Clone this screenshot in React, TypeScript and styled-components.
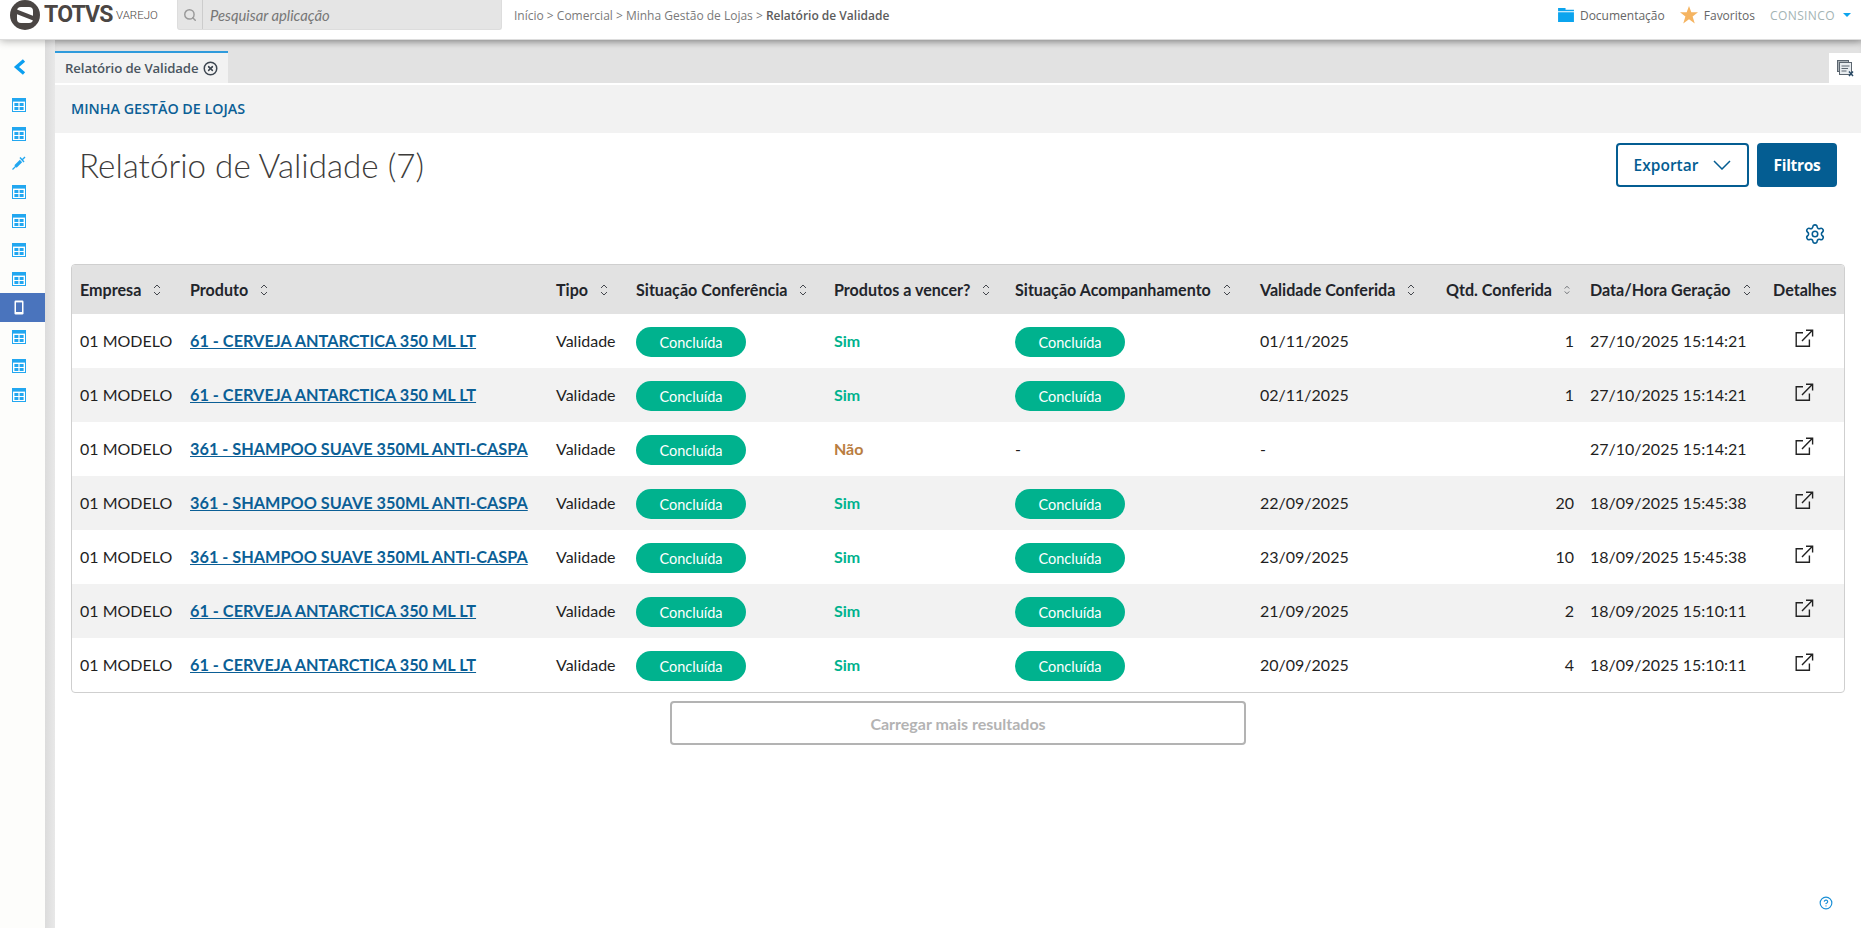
import React from 'react';
import styled, { createGlobalStyle } from 'styled-components';
import { Settings, Search, XCircle, CircleHelp } from 'lucide-react';

const Global = createGlobalStyle`
  html, body { margin: 0; padding: 0; height: 100%; background: #fff; overflow: hidden; }
  * { box-sizing: border-box; }
  body { font-family: Lato, "Open Sans", sans-serif; }
`;

const Page = styled.div`width: 1861px; height: 928px; display: flex; flex-direction: column; overflow: hidden;`;
const Header = styled.header`
  height: 40px; flex: none; display: flex; align-items: flex-start; background: #fff; position: relative; z-index: 2;
  box-shadow: 0 1px 8px rgba(0,0,0,.3); padding-left: 10px; border-bottom: 1px solid #ddd;
`;
const Logo = styled.div`width: 167px; height: 30px; display: flex; align-items: center; flex: none;`;
const LogoWord = styled.span`font: 700 23px/30px Roboto, sans-serif; color: #4b4644; margin-left: 4px; letter-spacing: -.8px; width: 67px; flex: none;`;
const LogoSub = styled.span`font: 300 11.5px/30px Roboto, sans-serif; color: #4b4644; margin-left: 5px;`;
const SearchBox = styled.div`width: 325px; height: 30px; flex: none; background: #e5e5e5; border-radius: 0 0 3px 3px; border: 1px solid #ddd; border-top: 0; display: flex; align-items: center;`;
const SearchIcon = styled.div`width: 25px; height: 100%; display: flex; align-items: center; justify-content: center; color: #999; border-right: 1px solid #ccc; flex: none;`;
const SearchText = styled.span`font: italic 400 14.8px Lato, sans-serif; color: #777; padding-left: 7px;`;
const Crumbs = styled.div`margin-left: 12px; height: 30px; display: flex; align-items: center; font: 400 12px "Open Sans", sans-serif; color: #7a7a7a; white-space: pre;`;
const CrumbCurrent = styled.b`font-weight: 600; color: #5c5c5c;`;
const HeaderRight = styled.div`margin-left: auto; height: 30px; display: flex; align-items: center; padding-right: 10px;`;
const HeaderLink = styled.span`font: 400 12px "Open Sans", sans-serif; color: #666; margin-left: 6px; margin-right: 15px;`;
const Company = styled.span`font: 400 12px "Open Sans", sans-serif; color: #a3b4b4; margin-right: 8px; letter-spacing: .4px;`;
const Caret = styled.i`width: 0; height: 0; border: 4px solid transparent; border-top: 4px solid #0ba4ee; border-bottom: 0;`;

const Body = styled.div`flex: 1; display: flex; min-height: 0;`;
const Sidebar = styled.nav`width: 45px; flex: none; background: #fdfdfb; padding-top: 10px; display: flex; flex-direction: column; align-items: stretch;`;
const SideItem = styled.div<{ $active?: boolean }>`
  height: 29px; display: flex; align-items: center; justify-content: center; flex: none; padding-right: 7px;
  background: ${p => (p.$active ? '#4a74bd' : 'transparent')};
`;
const BackItem = styled(SideItem)`height: 34px; margin-bottom: 6px;`;
const Gutter = styled.div`width: 10px; flex: none; background: linear-gradient(to right, #dcdcdc, #e8e8e8);`;
const Main = styled.main`flex: 1; min-width: 0; display: flex; flex-direction: column; background: #fff;`;
const TabBar = styled.div`height: 43px; flex: none; background: #e2e2e2; display: flex; align-items: flex-end; justify-content: space-between; box-shadow: inset 0 6px 6px -4px rgba(0,0,0,.18);`;
const Tab = styled.div`width: 173px; height: 32px; background: #f2f2f2; border-top: 2px solid #2f9bdc; display: flex; align-items: center; padding-left: 10px; gap: 5px; font: 600 13.2px "Open Sans", sans-serif; color: #4a5560; white-space: nowrap; letter-spacing: -.1px;`;
const CloseTabs = styled.div`width: 32px; height: 30px; background: #fff; display: flex; align-items: center; justify-content: center;`;
const Strip = styled.div`height: 48px; flex: none; margin-top: 2px; background: #f2f2f2; padding: 0 0 2px 16px; display: flex; align-items: center; font: 600 14.3px "Open Sans", sans-serif; color: #0b5f96; white-space: nowrap;`;
const TitleRow = styled.div`height: 89px; flex: none; display: flex; justify-content: space-between; align-items: flex-start; padding: 10px 24px 0 24px;`;
const Title = styled.h1`margin: 0; font: 300 33.2px/44px Lato, sans-serif; color: #3d3c3b;`;
const Actions = styled.div`display: flex; gap: 8px;`;
const ExportButton = styled.button`width: 133px; height: 44px; border: 2px solid #045d92; border-radius: 4px; background: #fff; color: #045d92; font: 600 15.5px "Open Sans", sans-serif; display: flex; align-items: center; justify-content: center; gap: 15px; padding: 0;`;
const FilterButton = styled.button`width: 80px; height: 44px; border: 0; border-radius: 4px; background: #045d92; color: #fff; font: 700 15.5px "Open Sans", sans-serif; padding: 0; letter-spacing: -.3px;`;
const GearRow = styled.div`height: 42px; flex: none; display: flex; justify-content: flex-end; padding: 1px 35px 0 0; color: #045d92;`;
const TableWrap = styled.div`margin: 0 16px; border: 1px solid #cfcfcf; border-radius: 4px; overflow: hidden; flex: none;`;
const Table = styled.table`width: 1772px; table-layout: fixed; border-collapse: collapse; font-family: Lato, sans-serif; color: #1f1f1f;`;
const HeadRow = styled.tr`height: 49px; background: #e2e2e2;`;
const Th = styled.th<{ $right?: boolean }>`padding: 0 ${p => (p.$right ? 12 : 8)}px 0 8px; text-align: left; font-size: 16.1px; font-weight: 700; color: #22252b; white-space: nowrap; overflow: hidden;`;
const ThInner = styled.span<{ $right?: boolean }>`display: flex; align-items: center; gap: 12px; justify-content: ${p => (p.$right ? 'flex-end' : 'flex-start')};`;
const Row = styled.tr`height: 54px; &:nth-child(even) { background: #f2f2f2; }`;
const Td = styled.td<{ $right?: boolean; $center?: boolean }>`padding: 0 8px 2px; font-size: 16px; white-space: nowrap; text-align: ${p => (p.$right ? 'right' : p.$center ? 'center' : 'left')};`;
const ProductLink = styled.a`color: #0b5f96; font-weight: 700; text-decoration: underline; font-size: 16.3px;`;
const Pill = styled.span`display: inline-flex; width: 110px; height: 30px; border-radius: 15px; align-items: center; justify-content: center; background: #00b28e; color: #fff; font-size: 14.5px; vertical-align: -9px;`;
const Answer = styled.span<{ $yes: boolean }>`font-weight: 700; color: ${p => (p.$yes ? '#00b28e' : '#b97d3f')};`;
const LoadRow = styled.div`display: flex; justify-content: center; padding-top: 8px;`;
const LoadButton = styled.button`width: 576px; height: 44px; border: 2px solid #b3b3b3; border-radius: 4px; background: #fff; color: #b3b3b3; font: 700 16px Lato, sans-serif; padding: 0;`;
const HelpBadge = styled.div`position: absolute; left: 1819px; top: 896px; color: #1a8fd6; display: flex;`;

const TableIcon = () => (
  <svg width="14" height="14" viewBox="0 0 14 14">
    <rect x=".5" y=".5" width="13" height="13" fill="#fff" stroke="#22a7f0" />
    <rect x="1" y="1" width="12" height="2.6" fill="#22a7f0" />
    <rect x="2.4" y="5" width="4" height="3" fill="#22a7f0" />
    <rect x="7.6" y="5" width="4" height="3" fill="#22a7f0" />
    <rect x="2.4" y="9" width="4" height="3" fill="#22a7f0" />
    <rect x="7.6" y="9" width="4" height="3" fill="#22a7f0" />
  </svg>
);
const SyringeIcon = () => (
  <svg width="14" height="14" viewBox="0 0 14 14" fill="none" stroke="#22a7f0">
    <path d="M.5 13.5 L4 10" strokeWidth="1.2" />
    <path d="M3.5 10.5 L9 5" strokeWidth="3.2" />
    <path d="M8 1.5 L12 6 M10 4 L13 1" strokeWidth="1.4" />
  </svg>
);
const PhoneIcon = () => (
  <svg width="10" height="15" viewBox="0 0 10 15">
    <rect x=".5" y=".5" width="9" height="14" rx="1.2" fill="#fff" />
    <rect x="2" y="2.4" width="6" height="9.6" fill="#4a74bd" />
  </svg>
);
const BackIcon = () => (
  <svg width="13" height="16" viewBox="0 0 13 16" fill="none" stroke="#0b9ff0" strokeWidth="3.4"><path d="M11 1.5 L3.5 8 L11 14.5" /></svg>
);
const LogoMark = () => (
  <svg width="30" height="30" viewBox="0 0 30 30">
    <circle cx="15" cy="15" r="15" fill="#4b4644" />
    <rect x="7" y="7" width="16" height="16" rx="4" fill="#fff" />
    <path d="M6 11.5 L24 18.5" stroke="#4b4644" strokeWidth="4.5" />
  </svg>
);
const SortIcon = () => (
  <svg width="8" height="12" viewBox="0 0 8 12" fill="none" stroke="#44474d" strokeWidth="1"><path d="M1 4 L4 1 L7 4 M1 8 L4 11 L7 8" /></svg>
);
const OpenIcon = () => (
  <svg width="19" height="19" viewBox="0 0 19 19" fill="none" stroke="#222" strokeWidth="1.4">
    <path d="M8 3.7 H1.2 V17.2 H14.4 V10.5" /><path d="M7 12 L17.2 1.6 M11 1.2 H17.6 V7.5" />
  </svg>
);
const ClearTabsIcon = () => (
  <svg width="17" height="17" viewBox="0 0 17 17" stroke="#5c6670">
    <rect x=".5" y=".5" width="11" height="11" fill="#a9b0b5" />
    <rect x="2.5" y="2.5" width="12" height="12" fill="#e8ecef" />
    <path d="M4.5 6 H12.5 M4.5 8.5 H11 M4.5 11 H9.5" />
    <path d="M12 11.5 L16 16 M16 11.5 L12 16" stroke="#2a4a66" strokeWidth="1.5" />
  </svg>
);
const FolderIcon = () => (
  <svg width="16" height="14" viewBox="0 0 17 15"><path d="M0 0 H8 V2 H17 V3.5 H0 Z M0 4.5 H17 V15 H0 Z" fill="#0ba4ee" /></svg>
);
const StarIcon = () => (
  <svg width="18" height="18" viewBox="0 0 20 20"><path d="M10 0 L12.6 7 H20 L14 11.6 L16.4 19.5 L10 14.6 L3.6 19.5 L6 11.6 L0 7 H7.4 Z" fill="#f5b461" /></svg>
);
const ExportChevron = () => (
  <svg width="18" height="10" viewBox="0 0 18 10" fill="none" stroke="#045d92" strokeWidth="1.5"><path d="M1 1 L9 9 L17 1" /></svg>
);

const widths = [110, 366, 80, 198, 181, 245, 186, 144, 183, 79];
const Col = styled.col<{ $w: number }>`width: ${p => p.$w}px;`;
const heads: [string, boolean, boolean][] = [
  ['Empresa', true, false], ['Produto', true, false], ['Tipo', true, false], ['Situação Conferência', true, false],
  ['Produtos a vencer?', true, false], ['Situação Acompanhamento', true, false], ['Validade Conferida', true, false],
  ['Qtd. Conferida', true, true], ['Data/Hora Geração', true, false], ['Detalhes', false, false],
];
const beer = '61 - CERVEJA ANTARCTICA 350 ML LT';
const shampoo = '361 - SHAMPOO SUAVE 350ML ANTI-CASPA';
const rows = [
  { p: beer, yes: true, v: '01/11/2025', q: '1', d: '27/10/2025 15:14:21' },
  { p: beer, yes: true, v: '02/11/2025', q: '1', d: '27/10/2025 15:14:21' },
  { p: shampoo, yes: false, v: '-', q: '', d: '27/10/2025 15:14:21' },
  { p: shampoo, yes: true, v: '22/09/2025', q: '20', d: '18/09/2025 15:45:38' },
  { p: shampoo, yes: true, v: '23/09/2025', q: '10', d: '18/09/2025 15:45:38' },
  { p: beer, yes: true, v: '21/09/2025', q: '2', d: '18/09/2025 15:10:11' },
  { p: beer, yes: true, v: '20/09/2025', q: '4', d: '18/09/2025 15:10:11' },
];
const side = ['t', 't', 'w', 't', 't', 't', 't', 'p', 't', 't', 't'];

export default function App() {
  return (
    <Page>
      <Global />
      <Header>
        <Logo><LogoMark /><LogoWord>TOTVS</LogoWord><LogoSub>VAREJO</LogoSub></Logo>
        <SearchBox>
          <SearchIcon><Search size={14} strokeWidth={2.5} /></SearchIcon>
          <SearchText>Pesquisar aplicação</SearchText>
        </SearchBox>
        <Crumbs>Início &gt; Comercial &gt; Minha Gestão de Lojas &gt; <CrumbCurrent>Relatório de Validade</CrumbCurrent></Crumbs>
        <HeaderRight>
          <FolderIcon />
          <HeaderLink>Documentação</HeaderLink>
          <StarIcon />
          <HeaderLink>Favoritos</HeaderLink>
          <Company>CONSINCO</Company>
          <Caret />
        </HeaderRight>
      </Header>
      <Body>
        <Sidebar>
          <BackItem><BackIcon /></BackItem>
          {side.map((s, i) => (
            <SideItem key={i} $active={s === 'p'}>
              {s === 't' ? <TableIcon /> : s === 'w' ? <SyringeIcon /> : <PhoneIcon />}
            </SideItem>
          ))}
        </Sidebar>
        <Gutter />
        <Main>
          <TabBar>
            <Tab>Relatório de Validade <XCircle size={15} color="#3d4650" strokeWidth={2.4} /></Tab>
            <CloseTabs><ClearTabsIcon /></CloseTabs>
          </TabBar>
          <Strip>MINHA GESTÃO DE LOJAS</Strip>
          <TitleRow>
            <Title>Relatório de Validade (7)</Title>
            <Actions>
              <ExportButton>Exportar <ExportChevron /></ExportButton>
              <FilterButton>Filtros</FilterButton>
            </Actions>
          </TitleRow>
          <GearRow><Settings size={22} strokeWidth={1.7} /></GearRow>
          <TableWrap>
            <Table>
              <colgroup>{widths.map((w, i) => <Col key={i} $w={w} />)}</colgroup>
              <thead>
                <HeadRow>
                  {heads.map(([h, sort, right]) => (
                    <Th key={h} $right={right}><ThInner $right={right}>{h}{sort && <SortIcon />}</ThInner></Th>
                  ))}
                </HeadRow>
              </thead>
              <tbody>
                {rows.map((r, i) => (
                  <Row key={i}>
                    <Td>01 MODELO</Td>
                    <Td><ProductLink>{r.p}</ProductLink></Td>
                    <Td>Validade</Td>
                    <Td><Pill>Concluída</Pill></Td>
                    <Td><Answer $yes={r.yes}>{r.yes ? 'Sim' : 'Não'}</Answer></Td>
                    <Td>{r.yes ? <Pill>Concluída</Pill> : '-'}</Td>
                    <Td>{r.v}</Td>
                    <Td $right>{r.q}</Td>
                    <Td>{r.d}</Td>
                    <Td $center><OpenIcon /></Td>
                  </Row>
                ))}
              </tbody>
            </Table>
          </TableWrap>
          <LoadRow><LoadButton>Carregar mais resultados</LoadButton></LoadRow>
        </Main>
      </Body>
      <HelpBadge><CircleHelp size={14} strokeWidth={2} /></HelpBadge>
    </Page>
  );
}
